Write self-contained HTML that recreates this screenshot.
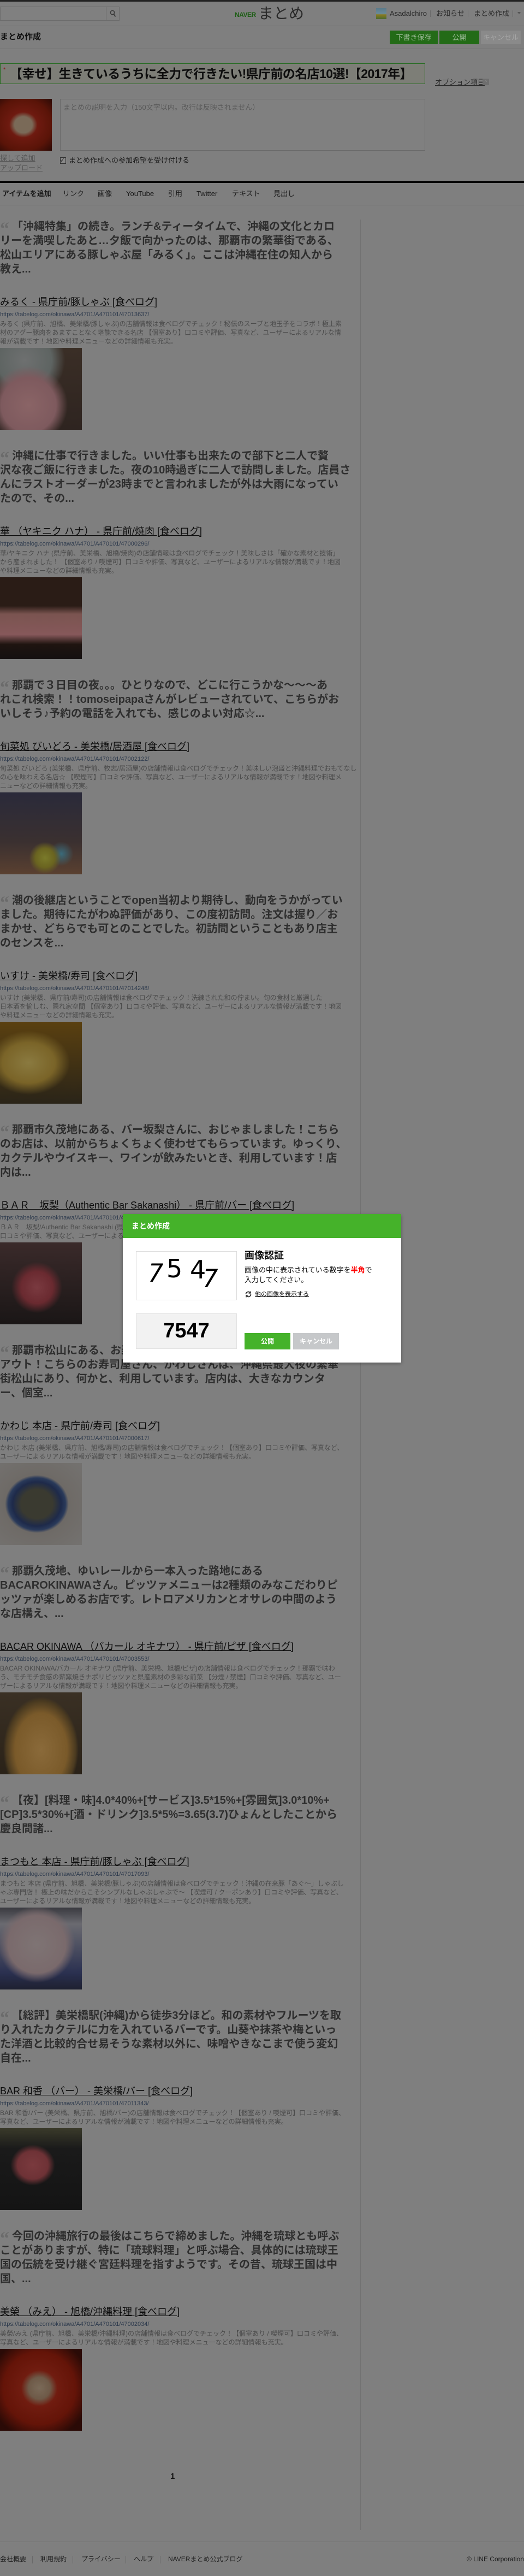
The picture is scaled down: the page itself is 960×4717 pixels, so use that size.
<!DOCTYPE html>
<html lang="ja"><head><meta charset="utf-8">
<style>
*{box-sizing:border-box;margin:0;padding:0}
body{width:960px;height:4717px;background:#7f7f7f;position:relative;overflow:hidden;font-family:"Liberation Sans","Noto Sans CJK JP",sans-serif;color:#1a1a1a}
.abs{position:absolute}
.hl{position:absolute;left:0;width:960px;height:1px;background:#6f6f6f}
.btn{position:absolute;top:56px;height:25px;color:#9bb995;font-size:13px;line-height:25px;text-align:center}
#content{position:absolute;left:0;top:402px;width:655px}
.item{margin-bottom:35px}
.q{font-weight:bold;font-size:20px;line-height:26px;color:#2e2e2e;white-space:nowrap}
.q .m{display:inline-block;width:22px;font-family:"Liberation Serif",serif;font-size:34px;line-height:20px;color:#6b6b6b;vertical-align:top;position:relative;top:8px;letter-spacing:-3px}
.t{margin-top:36px;height:22px;font-size:18px;line-height:22px;color:#0d0d0d;text-decoration:underline;white-space:nowrap}
.u{margin-top:5px;font-size:11px;line-height:14px;color:#2d3a4d;white-space:nowrap}
.d{margin-top:2px;font-size:12px;line-height:16px;color:#4b4b4b;white-space:nowrap}
.im{margin-top:4px;width:150px;height:150px}
.tab{position:absolute;top:346px;font-size:13px;line-height:18px;color:#1a1a1a}
.ft{position:absolute;top:4678px;font-size:12px;line-height:16px;color:#1e1e1e}
.sep{position:absolute;top:4680px;width:1px;height:14px;background:#6a6a6a}
</style></head><body>
<div class="abs" style="left:0;top:0;width:960px;height:3px;background:#222"></div>
<div class="abs" style="left:0;top:12px;width:219px;height:26px;border:1px solid #6c6c6c;background:#808080"></div>
<div class="abs" style="left:194px;top:13px;width:1px;height:24px;background:#6c6c6c"></div>
<svg class="abs" style="left:201px;top:18px" width="12" height="14" viewBox="0 0 12 14"><circle cx="5" cy="5" r="3.6" fill="none" stroke="#3a3a3a" stroke-width="1.5"/><path d="M7.5 8 L10.5 12.5" stroke="#3a3a3a" stroke-width="1.8"/></svg>
<div class="abs" style="left:430px;top:17px;font-weight:bold;font-size:12px;color:#1e5e16;letter-spacing:-0.5px;line-height:20px">NAVER</div>
<div class="abs" style="left:473px;top:8px;font-size:28px;color:#2a2a2a;line-height:34px">まとめ</div>
<div class="abs" style="left:689px;top:15px;width:19px;height:20px;background:linear-gradient(#5a7a8a 0,#6a8a9a 50%,#8a7a20 60%,#4a6a30 100%)"></div>
<div class="abs" style="left:714px;top:16px;font-size:13px;line-height:18px;color:#2a2a2a">Asadalchiro</div>
<div class="abs" style="left:788px;top:19px;width:1px;height:12px;background:#6a6a6a"></div>
<div class="abs" style="left:799px;top:16px;font-size:13px;line-height:18px;color:#2a2a2a">お知らせ</div>
<div class="abs" style="left:857px;top:19px;width:1px;height:12px;background:#6a6a6a"></div>
<div class="abs" style="left:868px;top:16px;font-size:13px;line-height:18px;color:#2a2a2a">まとめ作成</div>
<div class="abs" style="left:939px;top:19px;width:1px;height:12px;background:#6a6a6a"></div>
<div class="abs" style="left:948px;top:22px;width:0;height:0;border-left:3px solid transparent;border-right:3px solid transparent;border-top:4px solid #555"></div>
<div class="hl" style="top:47px"></div>
<div class="abs" style="left:0;top:58px;font-weight:bold;font-size:15px;line-height:20px;color:#111">まとめ作成</div>
<div class="btn" style="left:714px;width:88px;background:#236b17">下書き保存</div>
<div class="btn" style="left:805px;width:73px;background:#236b17">公開</div>
<div class="btn" style="left:881px;width:73px;background:#8a8a8a;color:#a6a6a6">キャンセル</div>
<div class="hl" style="top:89px"></div>
<div class="abs" style="left:0;top:116px;width:779px;height:38px;border:1px solid #1f6b1a;background:#7d7e77"></div>
<div class="abs" style="left:6px;top:122px;color:#8a1a1a;font-size:11px">*</div>
<div class="abs" style="left:18px;top:119px;font-weight:bold;font-size:23px;line-height:32px;color:#0e0e0e;white-space:nowrap;letter-spacing:-0.6px">【幸せ】生きているうちに全力で行きたい!県庁前の名店10選!【2017年】</div>
<div class="abs" style="left:797px;top:142px;font-size:13px;line-height:17px;color:#2a2a2a;text-decoration:underline">オプション項目</div>
<div class="abs" style="left:884px;top:144px;width:12px;height:12px;background:#6e6e6e;color:#8a8a8a;font-size:9px;line-height:12px;text-align:center">^</div>
<div class="abs" style="left:0;top:181px;width:95px;height:95px;background:radial-gradient(ellipse at 45% 50%,#7a6a58 0,#7a6a58 22%,#6e1a10 35%,#5a1408 70%,#2a0a06 100%)"></div>
<div class="abs" style="left:110px;top:181px;width:669px;height:95px;border:1px solid #6a6a6a;background:#808080"></div>
<div class="abs" style="left:116px;top:188px;font-size:13px;line-height:18px;color:#5a5a5a">まとめの説明を入力（150文字以内。改行は反映されません）</div>
<div class="abs" style="left:110px;top:288px;width:11px;height:12px;border:1px solid #333;background:#8a8a8a;font-size:10px;line-height:10px;color:#111">✓</div>
<div class="abs" style="left:126px;top:285px;font-size:13px;line-height:18px;color:#1a1a1a">まとめ作成への参加希望を受け付ける</div>
<div class="abs" style="left:0;top:281px;font-size:13px;line-height:18px;color:#555;text-decoration:underline">探して追加</div>
<div class="abs" style="left:0;top:299px;font-size:13px;line-height:18px;color:#555;text-decoration:underline">アップロード</div>
<div class="abs" style="left:0;top:331px;width:960px;height:4px;background:#050505"></div>
<div class="tab" style="left:4px;font-weight:bold">アイテムを追加</div>
<div class="tab" style="left:115px">リンク</div>
<div class="tab" style="left:179px">画像</div>
<div class="tab" style="left:231px">YouTube</div>
<div class="tab" style="left:308px">引用</div>
<div class="tab" style="left:360px">Twitter</div>
<div class="tab" style="left:425px">テキスト</div>
<div class="tab" style="left:501px">見出し</div>
<div class="hl" style="top:375px"></div>
<div class="abs" style="left:660px;top:402px;width:1px;height:4231px;background:#727272"></div>

<div id="content">
<div class="item">
<div class="q"><span class="m">“</span>「沖縄特集」の続き。ランチ&amp;ティータイムで、沖縄の文化とカロ<br>リーを満喫したあと…夕飯で向かったのは、那覇市の繁華街である、<br>松山エリアにある豚しゃぶ屋「みるく」。ここは沖縄在住の知人から<br>教え...</div>
<div class="t">みるく - 県庁前/豚しゃぶ [食べログ]</div>
<div class="u">https://tabelog.com/okinawa/A4701/A470101/47013637/</div>
<div class="d">みるく (県庁前、旭橋、美栄橋/豚しゃぶ)の店舗情報は食べログでチェック！秘伝のスープと地玉子をコラボ！極上素<br>材のアグー豚肉をあますことなく堪能できる名店 【個室あり】口コミや評価、写真など、ユーザーによるリアルな情<br>報が満載です！地図や料理メニューなどの詳細情報も充実。</div>
<div class="im" style="background:radial-gradient(circle at 35% 70%,#8a6466 0,#7e5a5e 35%,transparent 50%),radial-gradient(circle at 30% 15%,#6e7070 0,#5e6462 30%,transparent 45%),linear-gradient(#3a2e26,#2e2420)"></div>
</div>
<div class="item">
<div class="q"><span class="m">“</span>沖縄に仕事で行きました。いい仕事も出来たので部下と二人で贅<br>沢な夜ご飯に行きました。夜の10時過ぎに二人で訪問しました。店員さ<br>んにラストオーダーが23時までと言われましたが外は大雨になってい<br>たので、その...</div>
<div class="t">華 （ヤキニク ハナ） - 県庁前/焼肉 [食べログ]</div>
<div class="u">https://tabelog.com/okinawa/A4701/A470101/47000296/</div>
<div class="d">華/ヤキニク ハナ (県庁前、美栄橋、旭橋/焼肉)の店舗情報は食べログでチェック！美味しさは「確かな素材と技術」<br>から産まれました！ 【個室あり / 喫煙可】口コミや評価、写真など、ユーザーによるリアルな情報が満載です！地図<br>や料理メニューなどの詳細情報も充実。</div>
<div class="im" style="background:linear-gradient(#2a1c16 0,#2a1c16 35%,#7a5450 45%,#86585a 70%,#1e1410 82%,#141010 100%)"></div>
</div>
<div class="item">
<div class="q"><span class="m">“</span>那覇で３日目の夜。。。ひとりなので、どこに行こうかな〜〜〜あ<br>れこれ検索！！tomoseipapaさんがレビューされていて、こちらがお<br>いしそう♪予約の電話を入れても、感じのよい対応☆...</div>
<div class="t">旬菜処 びいどろ - 美栄橋/居酒屋 [食べログ]</div>
<div class="u">https://tabelog.com/okinawa/A4701/A470101/47002122/</div>
<div class="d">旬菜処 びいどろ (美栄橋、県庁前、牧志/居酒屋)の店舗情報は食べログでチェック！美味しい泡盛と沖縄料理でおもてなし<br>の心を味わえる名店☆ 【喫煙可】口コミや評価、写真など、ユーザーによるリアルな情報が満載です！地図や料理メ<br>ニューなどの詳細情報も充実。</div>
<div class="im" style="background:radial-gradient(circle at 55% 80%,#7a7a2a 0,#6a6420 12%,transparent 20%),radial-gradient(circle at 75% 75%,#3a6a7a 0,transparent 14%),linear-gradient(#2a2a3a,#3a3030 60%,#5a4030)"></div>
</div>
<div class="item">
<div class="q"><span class="m">“</span>潮の後継店ということでopen当初より期待し、動向をうかがってい<br>ました。期待にたがわぬ評価があり、この度初訪問。注文は握り／お<br>まかせ、どちらでも可とのことでした。初訪問ということもあり店主<br>のセンスを...</div>
<div class="t">いすけ - 美栄橋/寿司 [食べログ]</div>
<div class="u">https://tabelog.com/okinawa/A4701/A470101/47014248/</div>
<div class="d">いすけ (美栄橋、県庁前/寿司)の店舗情報は食べログでチェック！洗練された和の佇まい。旬の食材と厳選した<br>日本酒を愉しむ、隠れ家空間 【個室あり】口コミや評価、写真など、ユーザーによるリアルな情報が満載です！地図<br>や料理メニューなどの詳細情報も充実。</div>
<div class="im" style="background:radial-gradient(ellipse at 35% 50%,#8a7a40 0,#7a6428 35%,transparent 55%),linear-gradient(#5a4010,#2a2418)"></div>
</div>
<div class="item">
<div class="q"><span class="m">“</span>那覇市久茂地にある、バー坂梨さんに、おじゃましました！こちら<br>のお店は、以前からちょくちょく使わせてもらっています。ゆっくり、<br>カクテルやウイスキー、ワインが飲みたいとき、利用しています！店<br>内は...</div>
<div class="t">ＢＡＲ　坂梨（Authentic Bar Sakanashi） - 県庁前/バー [食べログ]</div>
<div class="u">https://tabelog.com/okinawa/A4701/A470101/47004470/</div>
<div class="d">ＢＡＲ　坂梨/Authentic Bar Sakanashi (県庁前、美栄橋、旭橋/バー)の店舗情報は食べログでチェック！【喫煙可】<br>口コミや評価、写真など、ユーザーによるリアルな情報が満載です！地図や料理メニューなどの詳細情報も充実。</div>
<div class="im" style="background:radial-gradient(ellipse at 45% 55%,#7a3a40 0,#6a2a30 25%,transparent 40%),linear-gradient(#3a2a2a,#1a1616)"></div>
</div>
<div class="item">
<div class="q"><span class="m">“</span>那覇市松山にある、お寿司屋さん「かわじ」さんでテイク<br>アウト！こちらのお寿司屋さん、かわじさんは、沖縄県最大夜の繁華<br>街松山にあり、何かと、利用しています。店内は、大きなカウンタ<br>ー、個室...</div>
<div class="t">かわじ 本店 - 県庁前/寿司 [食べログ]</div>
<div class="u">https://tabelog.com/okinawa/A4701/A470101/47000617/</div>
<div class="d">かわじ 本店 (美栄橋、県庁前、旭橋/寿司)の店舗情報は食べログでチェック！【個室あり】口コミや評価、写真など、<br>ユーザーによるリアルな情報が満載です！地図や料理メニューなどの詳細情報も充実。</div>
<div class="im" style="background:radial-gradient(ellipse at 45% 50%,#3a3a30 0,#3a3a30 25%,#1e2a4a 38%,#2a3a5a 45%,#6e6a66 50%,#747270 100%)"></div>
</div>
<div class="item">
<div class="q"><span class="m">“</span>那覇久茂地、ゆいレールから一本入った路地にある<br>BACAROKINAWAさん。ピッツァメニューは2種類のみなこだわりピ<br>ッツァが楽しめるお店です。レトロアメリカンとオサレの中間のよう<br>な店構え、...</div>
<div class="t">BACAR OKINAWA （バカール オキナワ） - 県庁前/ピザ [食べログ]</div>
<div class="u">https://tabelog.com/okinawa/A4701/A470101/47003553/</div>
<div class="d">BACAR OKINAWA/バカール オキナワ (県庁前、美栄橋、旭橋/ピザ)の店舗情報は食べログでチェック！那覇で味わ<br>う、モチモチ食感の薪窯焼きナポリピッツァと県産素材の多彩な前菜 【分煙 / 禁煙】口コミや評価、写真など、ユー<br>ザーによるリアルな情報が満載です！地図や料理メニューなどの詳細情報も充実。</div>
<div class="im" style="background:radial-gradient(ellipse at 50% 70%,#8a6a3a 0,#7a5a2a 45%,#4a3a20 60%,transparent 65%),linear-gradient(#3a3024,#2a2218)"></div>
</div>
<div class="item">
<div class="q"><span class="m">“</span>【夜】[料理・味]4.0*40%+[サービス]3.5*15%+[雰囲気]3.0*10%+<br>[CP]3.5*30%+[酒・ドリンク]3.5*5%=3.65(3.7)ひょんとしたことから<br>慶良間諸...</div>
<div class="t">まつもと 本店 - 県庁前/豚しゃぶ [食べログ]</div>
<div class="u">https://tabelog.com/okinawa/A4701/A470101/47017093/</div>
<div class="d">まつもと 本店 (県庁前、旭橋、美栄橋/豚しゃぶ)の店舗情報は食べログでチェック！沖縄の在来豚「あぐ〜」しゃぶし<br>ゃぶ専門店！ 極上の味だからこそシンプルなしゃぶしゃぶで〜 【喫煙可 / クーポンあり】口コミや評価、写真など、<br>ユーザーによるリアルな情報が満載です！地図や料理メニューなどの詳細情報も充実。</div>
<div class="im" style="background:radial-gradient(ellipse at 45% 45%,#7e7474 0,#7a6a6c 45%,transparent 60%),linear-gradient(#3a3a40 0,#6a6a70 20%,#2a3050 80%,#1e2030)"></div>
</div>
<div class="item">
<div class="q"><span class="m">“</span>【総評】美栄橋駅(沖縄)から徒歩3分ほど。和の素材やフルーツを取<br>り入れたカクテルに力を入れているバーです。山葵や抹茶や梅といっ<br>た洋酒と比較的合せ易そうな素材以外に、味噌やきなこまで使う変幻<br>自在...</div>
<div class="t">BAR 和香 （バー） - 美栄橋/バー [食べログ]</div>
<div class="u">https://tabelog.com/okinawa/A4701/A470101/47011343/</div>
<div class="d">BAR 和香/バー (美栄橋、県庁前、旭橋/バー)の店舗情報は食べログでチェック！【個室あり / 喫煙可】口コミや評価、<br>写真など、ユーザーによるリアルな情報が満載です！地図や料理メニューなどの詳細情報も充実。</div>
<div class="im" style="background:radial-gradient(ellipse at 40% 45%,#7a3a3e 0,#6e3236 22%,transparent 32%),linear-gradient(#3a3a2a 0,#1a1a1a 25%,#141414)"></div>
</div>
<div class="item">
<div class="q"><span class="m">“</span>今回の沖縄旅行の最後はこちらで締めました。沖縄を琉球とも呼ぶ<br>ことがありますが、特に「琉球料理」と呼ぶ場合、具体的には琉球王<br>国の伝統を受け継ぐ宮廷料理を指すようです。その昔、琉球王国は中<br>国、...</div>
<div class="t">美榮 （みえ） - 旭橋/沖縄料理 [食べログ]</div>
<div class="u">https://tabelog.com/okinawa/A4701/A470101/47002034/</div>
<div class="d">美榮/みえ (県庁前、旭橋、美栄橋/沖縄料理)の店舗情報は食べログでチェック！【個室あり / 喫煙可】口コミや評価、<br>写真など、ユーザーによるリアルな情報が満載です！地図や料理メニューなどの詳細情報も充実。</div>
<div class="im" style="background:radial-gradient(ellipse at 48% 48%,#7a6a58 0,#6e5a48 18%,#701c10 30%,#641408 60%,#2a0a06 85%)"></div>
</div>
</div>

<div class="abs" style="left:312px;top:4526px;font-weight:bold;font-size:15px;line-height:18px;color:#111">1</div>
<div class="hl" style="top:4654px"></div>
<div class="ft" style="left:0">会社概要</div><div class="sep" style="left:59px"></div>
<div class="ft" style="left:74px">利用規約</div><div class="sep" style="left:133px"></div>
<div class="ft" style="left:149px">プライバシー</div><div class="sep" style="left:230px"></div>
<div class="ft" style="left:245px">ヘルプ</div><div class="sep" style="left:293px"></div>
<div class="ft" style="left:308px">NAVERまとめ公式ブログ</div>
<div class="ft" style="right:0">© LINE Corporation</div>

<div class="abs" style="left:225px;top:2223px;width:510px;height:272px;background:#fff;box-shadow:0 2px 6px rgba(0,0,0,.3)">
 <div style="height:44px;background:#45b22a;color:#fff;font-weight:bold;font-size:14px;line-height:44px;padding-left:16px">まとめ作成</div>
 <div class="abs" style="left:24px;top:68px;width:185px;height:90px;border:1px solid #ddd;background:#fff;overflow:hidden">
  <span class="abs" style="left:20px;top:14px;font-family:'DejaVu Sans',sans-serif;font-size:46px;line-height:50px;color:#000;transform:skewX(-12deg)">7</span>
  <span class="abs" style="left:55px;top:6px;font-family:'DejaVu Sans',sans-serif;font-size:46px;line-height:50px;color:#000">5</span>
  <span class="abs" style="left:98px;top:8px;font-family:'DejaVu Sans',sans-serif;font-size:46px;line-height:50px;color:#000">4</span>
  <span class="abs" style="left:120px;top:24px;font-family:'DejaVu Sans',sans-serif;font-size:46px;line-height:50px;color:#000;transform:skewX(-12deg)">7</span>
 </div>
 <div class="abs" style="left:223px;top:64px;font-weight:bold;font-size:18px;line-height:24px;color:#111">画像認証</div>
 <div class="abs" style="left:223px;top:94px;font-size:13px;line-height:18px;color:#111;white-space:nowrap">画像の中に表示されている数字を<span style="color:#f00;font-weight:bold">半角</span>で<br>入力してください。</div>
 <svg class="abs" style="left:223px;top:140px" width="14" height="14" viewBox="0 0 14 14"><path d="M2.5 7a4.5 4.5 0 0 1 8-2.8M11.5 7a4.5 4.5 0 0 1-8 2.8" fill="none" stroke="#222" stroke-width="1.6"/><path d="M11 1.5v3.5H7.5M3 12.5V9h3.5" fill="none" stroke="#222" stroke-width="1.3"/></svg>
 <div class="abs" style="left:242px;top:139px;font-size:11px;line-height:16px;color:#111;text-decoration:underline">他の画像を表示する</div>
 <div class="abs" style="left:24px;top:182px;width:185px;height:65px;border:1px solid #e2e2e2;background:#f2f2f2;text-align:center;font-weight:bold;font-size:38px;line-height:63px;color:#000">7547</div>
 <div class="abs" style="left:223px;top:218px;width:84px;height:30px;background:#45b22a;color:#fff;font-weight:bold;font-size:12px;line-height:30px;text-align:center">公開</div>
 <div class="abs" style="left:312px;top:218px;width:84px;height:30px;background:#c6c8ca;color:#fff;font-weight:bold;font-size:12px;line-height:30px;text-align:center">キャンセル</div>
</div>
</body></html>
